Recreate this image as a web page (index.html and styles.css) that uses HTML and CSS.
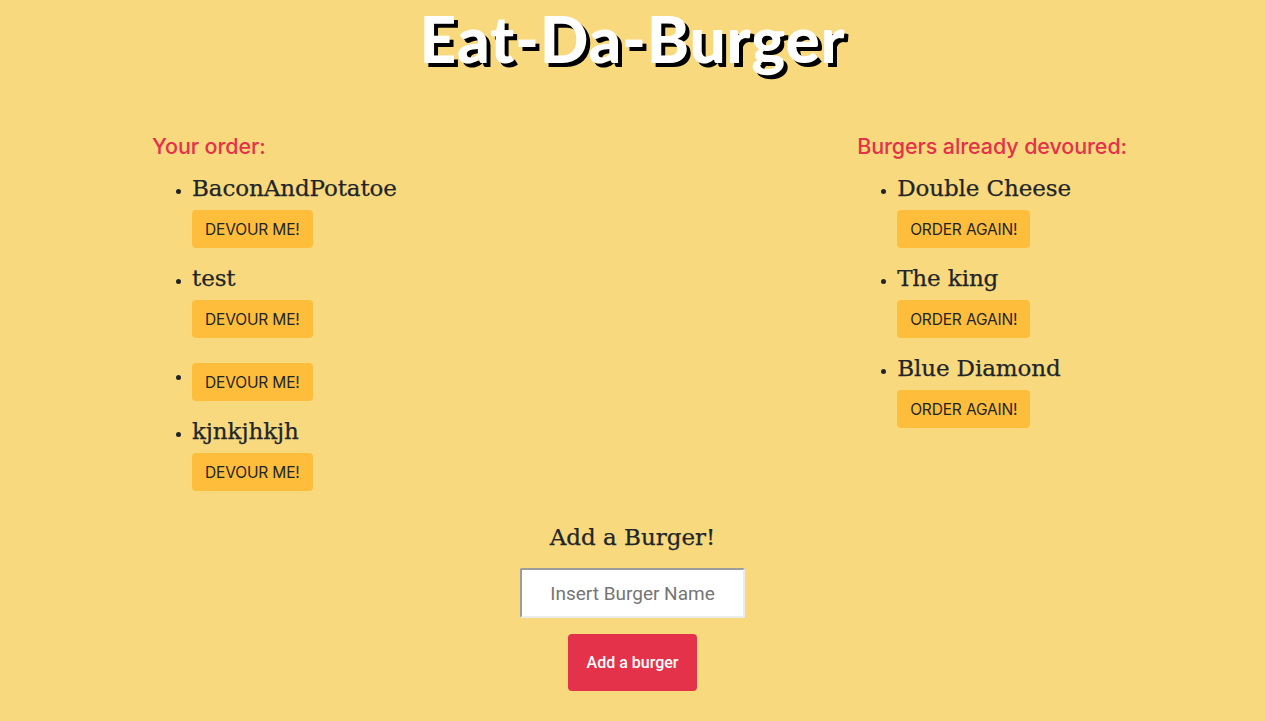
FILE: index.html
```html
<!DOCTYPE html>
<html lang="en">
<head>
<meta charset="utf-8">
<title>Eat-Da-Burger</title>
<link rel="stylesheet" href="styles.css">
</head>
<body>
<header class="masthead">
  <h1 class="title">Eat-Da-Burger</h1>
</header>
<main class="board">
  <section class="column column--left">
    <h2 class="column-title">Your order:</h2>
    <ul class="burger-list">
      <li class="burger">
        <div class="burger-name">BaconAndPotatoe</div>
        <button class="btn btn-yellow">DEVOUR ME!</button>
      </li>
      <li class="burger">
        <div class="burger-name">test</div>
        <button class="btn btn-yellow">DEVOUR ME!</button>
      </li>
      <li class="burger burger--noname">
        <div class="burger-name"></div>
        <button class="btn btn-yellow">DEVOUR ME!</button>
      </li>
      <li class="burger">
        <div class="burger-name">kjnkjhkjh</div>
        <button class="btn btn-yellow">DEVOUR ME!</button>
      </li>
    </ul>
  </section>
  <section class="column column--right">
    <h2 class="column-title">Burgers already devoured:</h2>
    <ul class="burger-list">
      <li class="burger">
        <div class="burger-name">Double Cheese</div>
        <button class="btn btn-yellow">ORDER AGAIN!</button>
      </li>
      <li class="burger">
        <div class="burger-name">The king</div>
        <button class="btn btn-yellow">ORDER AGAIN!</button>
      </li>
      <li class="burger">
        <div class="burger-name">Blue Diamond</div>
        <button class="btn btn-yellow">ORDER AGAIN!</button>
      </li>
    </ul>
  </section>
</main>
<form class="add-form">
  <h3 class="add-title">Add a Burger!</h3>
  <input class="add-input" type="text" placeholder="Insert Burger Name">
  <button class="btn btn-red" type="button">Add a burger</button>
</form>
</body>
</html>
```
FILE: styles.css
```css
html, body {
  margin: 0;
  padding: 0;
}
body {
  background: #f8d97d;
  color: #212529;
  font-family: Roboto, "Liberation Sans", sans-serif;
  height: 721px;
  overflow: hidden;
}
.masthead {
  display: flex;
  justify-content: center;
  height: 80px;
}
.title {
  margin: 0;
  font-family: Lato, "Open Sans", sans-serif;
  font-weight: 900;
  font-size: 64px;
  line-height: normal;
  color: #fff;
  text-shadow: 4px 4px 0 #000;
  letter-spacing: 0.8px;
}
.board {
  display: flex;
  justify-content: space-between;
  box-sizing: border-box;
  padding: 53px 0 0 152px;
  width: 1127px;
  height: 441px;
}
.column-title {
  margin: 0;
  font-family: Inter, Roboto, sans-serif;
  font-size: 21.5px;
  line-height: 26px;
  font-weight: 500;
  color: #e3324a;
  letter-spacing: -0.1px;
}
.burger-list {
  margin: 10px 0 0;
  padding-left: 40px;
}
.burger {
  padding-bottom: 11px;
  font-size: 15px;
  line-height: 38px;
}
.burger--noname {
  padding-top: 9px;
}
.burger-name {
  font-family: "DejaVu Serif", "Liberation Serif", serif;
  font-size: 23px;
  line-height: 36px;
  color: #212529;
  -webkit-text-stroke: 0.25px #212529;
  letter-spacing: -0.1px;
  padding-top: 1px;
  margin-bottom: -1px;
}
.btn {
  border: 0;
  border-radius: 4px;
  cursor: pointer;
}
.btn-yellow {
  display: inline-block;
  vertical-align: top;
  margin-top: 5px;
  height: 38px;
  padding: 0 13px;
  background: #ffbd3c;
  color: #212529;
  font-family: Inter, Roboto, sans-serif;
  font-size: 15.5px;
  letter-spacing: -0.15px;
}
.add-form {
  display: flex;
  flex-direction: column;
  align-items: center;
}
.add-title {
  margin: 0;
  font-family: "DejaVu Serif", "Liberation Serif", serif;
  font-weight: 400;
  font-size: 23px;
  line-height: 32px;
  -webkit-text-stroke: 0.25px #212529;
}
.add-input {
  margin-top: 15px;
  width: 225px;
  height: 50px;
  box-sizing: border-box;
  border: 2px solid #9d9d9d;
  border-right-color: #ececec;
  border-bottom-color: #ececec;
  border-radius: 2px;
  background: #fff;
  text-align: center;
  font-family: Roboto, "Liberation Sans", sans-serif;
  font-size: 19px;
  color: #212529;
}
.add-input::placeholder {
  color: #757575;
}
.btn-red {
  margin-top: 16px;
  width: 129px;
  height: 57px;
  background: #e3324a;
  color: #fff;
  font-family: Roboto, "Liberation Sans", sans-serif;
  font-size: 16px;
  font-weight: 500;
}
```
